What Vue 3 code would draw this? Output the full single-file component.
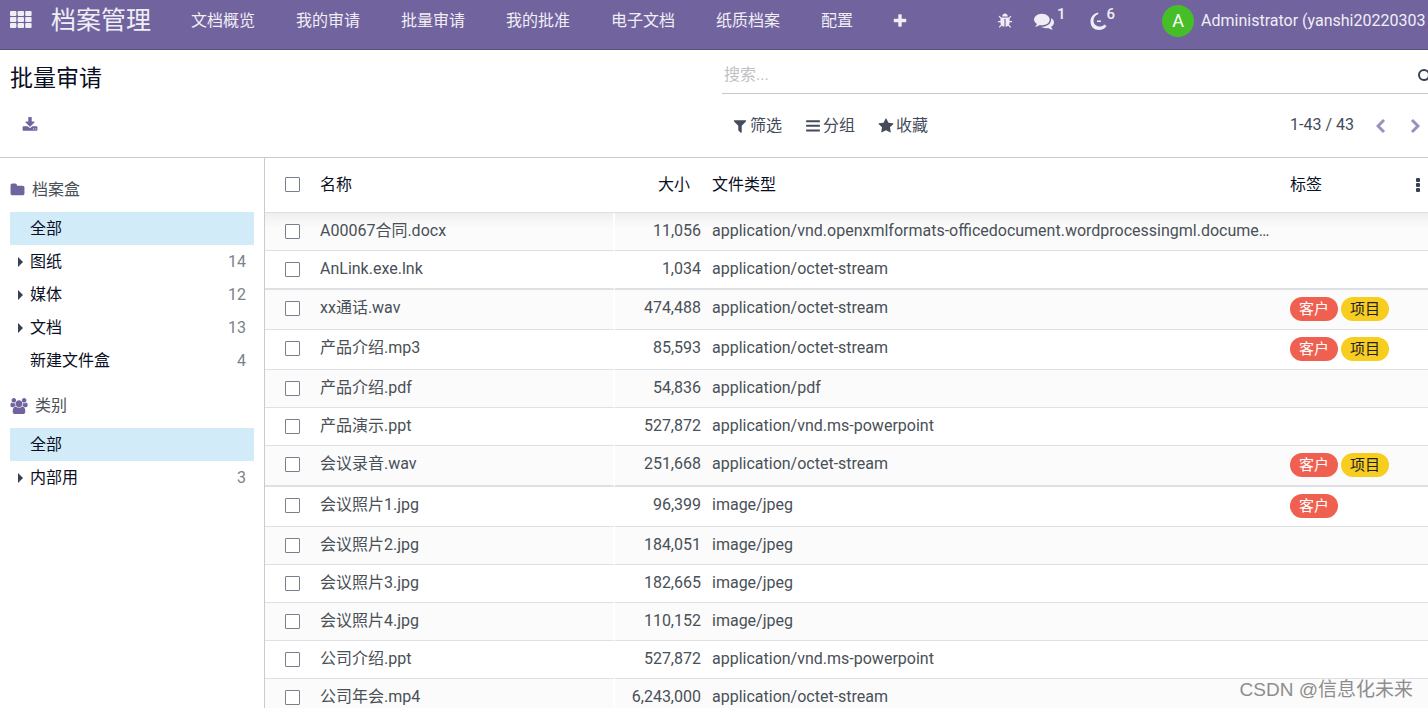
<script setup>
import { ref } from 'vue'

const paths = {
  plus: 'M1600 736v192q0 40-28 68t-68 28h-416v416q0 40-28 68t-68 28h-192q-40 0-68-28t-28-68v-416h-416q-40 0-68-28t-28-68v-192q0-40 28-68t68-28h416v-416q0-40 28-68t68-28h192q40 0 68 28t28 68v416h416q40 0 68 28t28 68z',
  bug: 'M1696 960q0 26-19 45t-45 19h-224q0 171-67 290l208 209q19 19 19 45t-19 45q-18 19-45 19t-45-19l-198-197q-5 5-15 13t-42 28.5-65 36.5-82 29-97 13v-896h-128v896q-51 0-101.5-13.5t-87-33-66-39-43.5-32.5l-15-14-183 207q-20 21-48 21-24 0-43-16-19-18-20.5-44.5t15.5-46.5l202-227q-58-114-58-274h-224q-26 0-45-19t-19-45 19-45 45-19h224v-294l-173-173q-19-19-19-45t19-45 45-19 45 19l173 173h844l173-173q19-19 45-19t45 19 19 45-19 45l-173 173v294h224q26 0 45 19t19 45zm-480-576h-640q0-133 93.5-226.5t226.5-93.5 226.5 93.5 93.5 226.5z',
  comments: 'M1408 768q0 139-94 257t-256.5 186.5-353.5 68.5q-86 0-176-16-124 88-278 128-36 9-86 16h-3q-11 0-20.5-8t-11.5-21q-1-3-1-6.5t.5-6.5 2-6l2.5-5 3.5-5.5 4-5 4.5-5 4-4.5q5-6 23-25t26-29.5 22.5-29 25-38.5 20.5-44q-124-72-195-177t-71-224q0-139 94-257t256.5-186.5 353.5-68.5 353.5 68.5 256.5 186.5 94 257zm384 256q0 120-71 224.5t-195 176.5q10 24 20.5 44t25 38.5 22.5 29 26 29.5 23 25q1 1 4 4.5t4.5 5 4 5 3.5 5.5l2.5 5 2 6 .5 6.5-1 6.5q-3 14-13 22t-22 7q-50-7-86-16-154-40-278-128-90 16-176 16-271 0-472-132 58 4 88 4 161 0 309-45t264-129q125-92 192-212t67-254q0-77-23-152 129 71 204 178t75 230z',
  filter: 'M1595 295q17 41-14 70l-493 493v742q0 42-39 59-13 5-25 5-27 0-45-19l-256-256q-19-19-19-45v-486l-493-493q-31-29-14-70 17-39 59-39h1280q42 0 59 39z',
  group: 'M128 256h1536v224h-1536zM128 768h1536v224h-1536zM128 1280h1536v224h-1536z',
  star: 'M1728 647q0 22-26 48l-363 354 86 500q1 7 1 20 0 21-10.5 35.5t-30.5 14.5q-19 0-40-12l-449-236-449 236q-22 12-40 12-21 0-31.5-14.5t-10.5-35.5q0-6 2-20l86-500-364-354q-25-27-25-48 0-37 56-46l502-73 225-455q19-41 49-41t49 41l225 455 502 73q56 9 56 46z',
  folder: 'M1728 608v704q0 92-66 158t-158 66h-1216q-92 0-158-66t-66-158v-960q0-92 66-158t158-66h320q92 0 158 66t66 158v32h672q92 0 158 66t66 158z',
  users: 'M593 896q-162 5-265 128h-134q-82 0-138-40.5t-56-118.5q0-353 124-353 6 0 43.5 21t97.5 42.5 119 21.5q67 0 133-23-5 37-5 66 0 159 93 256zm1071 637q0 120-73 189.5t-194 69.5h-874q-121 0-194-69.5t-73-189.5q0-53 3.5-103.5t14-109 26.5-108.5 43-97.5 62-81 85.5-53.5 111.5-20q10 0 43 21.5t73 48 107 48 135 21.5 135-21.5 107-48 73-48 43-21.5q61 0 111.5 20t85.5 53.5 62 81 43 97.5 26.5 108.5 14 109 3.5 103.5zm-1024-1277q0 106-75 181t-181 75-181-75-75-181 75-181 181-75 181 75 75 181zm704 384q0 159-112.5 271.5t-271.5 112.5-271.5-112.5-112.5-271.5 112.5-271.5 271.5-112.5 271.5 112.5 112.5 271.5zm576 225q0 78-56 118.5t-138 40.5h-134q-103-123-265-128 93-97 93-256 0-29-5-66 66 23 133 23 59 0 119-21.5t97.5-42.5 43.5-21q124 0 124 353zm-128-609q0 106-75 181t-181 75-181-75-75-181 75-181 181-75 181 75 75 181z',
  download: 'M1344 1344q0-26-19-45t-45-19-45 19-19 45 19 45 45 19 45-19 19-45zm256 0q0-26-19-45t-45-19-45 19-19 45 19 45 45 19 45-19 19-45zm128-224v320q0 40-28 68t-68 28h-1472q-40 0-68-28t-28-68v-320q0-40 28-68t68-28h465l135 136q58 56 136 56t136-56l136-136h464q40 0 68 28t28 68zm-325-569q17 41-14 70l-448 448q-18 19-45 19t-45-19l-448-448q-31-29-14-70 17-39 59-39h256v-448q0-26 19-45t45-19h256q26 0 45 19t19 45v448h256q42 0 59 39z',
}

const menus = ['文档概览', '我的审请', '批量审请', '我的批准', '电子文档', '纸质档案', '配置']

const filters = [
  { icon: 'filter', label: '筛选' },
  { icon: 'group', label: '分组' },
  { icon: 'star', label: '收藏' },
]

const sections = [
  {
    title: '档案盒',
    icon: 'folder',
    box: '0 0 1792 1792',
    items: [
      { label: '全部', active: true },
      { label: '图纸', count: 14, fold: true },
      { label: '媒体', count: 12, fold: true },
      { label: '文档', count: 13, fold: true },
      { label: '新建文件盒', count: 4 },
    ],
  },
  {
    title: '类别',
    icon: 'users',
    box: '0 0 1920 1792',
    items: [
      { label: '全部', active: true },
      { label: '内部用', count: 3, fold: true },
    ],
  },
]

const stream = 'application/octet-stream'
const ppt = 'application/vnd.ms-powerpoint'
const files = [
  { name: 'A00067合同.docx', size: '11,056', type: 'application/vnd.openxmlformats-officedocument.wordprocessingml.docume…', tags: [] },
  { name: 'AnLink.exe.lnk', size: '1,034', type: stream, tags: [], thick: true },
  { name: 'xx通话.wav', size: '474,488', type: stream, tags: ['客户', '项目'] },
  { name: '产品介绍.mp3', size: '85,593', type: stream, tags: ['客户', '项目'] },
  { name: '产品介绍.pdf', size: '54,836', type: 'application/pdf', tags: [] },
  { name: '产品演示.ppt', size: '527,872', type: ppt, tags: [] },
  { name: '会议录音.wav', size: '251,668', type: stream, tags: ['客户', '项目'], thick: true },
  { name: '会议照片1.jpg', size: '96,399', type: 'image/jpeg', tags: ['客户'] },
  { name: '会议照片2.jpg', size: '184,051', type: 'image/jpeg', tags: [] },
  { name: '会议照片3.jpg', size: '182,665', type: 'image/jpeg', tags: [] },
  { name: '会议照片4.jpg', size: '110,152', type: 'image/jpeg', tags: [] },
  { name: '公司介绍.ppt', size: '527,872', type: ppt, tags: [] },
  { name: '公司年会.mp4', size: '6,243,000', type: stream, tags: [] },
]

const query = ref('')
</script>

<template>
  <div class="app">
    <header class="navbar">
      <button class="apps" aria-label="应用">
        <svg viewBox="0 0 22 17">
          <template v-for="r in 3" :key="r">
            <rect v-for="c in 3" :key="c" :x="(c - 1) * 7.6" :y="(r - 1) * 6" width="6.4" height="5" rx="1" />
          </template>
        </svg>
      </button>
      <a class="brand" href="#">档案管理</a>
      <nav class="menus">
        <a v-for="m in menus" :key="m" href="#">{{ m }}</a>
        <button class="add" aria-label="新建"><svg class="ico" viewBox="0 0 1792 1792"><path :d="paths.plus" /></svg></button>
      </nav>
      <div class="systray">
        <button aria-label="调试"><svg class="ico" viewBox="0 0 1792 1792"><path :d="paths.bug" /></svg></button>
        <button class="chat" aria-label="消息">
          <svg class="ico large" viewBox="0 0 1792 1792"><path :d="paths.comments" /></svg><span class="badge">1</span>
        </button>
        <button class="activity" aria-label="活动">
          <svg class="ico moon" viewBox="0 0 18 18">
            <path d="M8 .5C3.500 1.500 .5 5 .5 9.500C.5 14.500 4 18 9 18C12 18 15 16.500 16.500 14L14.500 12.500C13 14 11.500 14.500 10 14.500C6 14.500 3.500 12 3.500 8.500C3.500 5.500 5.500 3 8.500 2z" />
            <rect x="7" y="8.500" width="4" height="1.500" />
          </svg><span class="badge">6</span>
        </button>
        <button class="user"><span class="avatar">A</span><span>Administrator (yanshi20220303</span></button>
      </div>
    </header>

    <section class="panel">
      <div class="panel-left">
        <h1>批量审请</h1>
        <button class="export" aria-label="导出"><svg class="ico" viewBox="0 0 1792 1792"><path :d="paths.download" /></svg></button>
      </div>
      <div class="panel-right">
        <div class="search">
          <input v-model="query" type="text" placeholder="搜索..." aria-label="搜索" />
          <button aria-label="查找">
            <svg class="ico" viewBox="0 0 16 16"><circle cx="7" cy="7" r="5" /><path d="M11 11l4 4" /></svg>
          </button>
        </div>
        <div class="tools">
          <div class="filters">
            <button v-for="f in filters" :key="f.label">
              <svg class="ico" viewBox="0 0 1792 1792"><path :d="paths[f.icon]" /></svg>{{ f.label }}
            </button>
          </div>
          <div class="pager">
            <span>1-43 / 43</span>
            <button aria-label="上一页"><svg viewBox="0 0 10 16"><path d="M8 2L2 8l6 6" /></svg></button>
            <button aria-label="下一页"><svg viewBox="0 0 10 16"><path d="M2 2l6 6-6 6" /></svg></button>
          </div>
        </div>
      </div>
    </section>

    <main class="content">
      <aside class="sidebar">
        <section v-for="s in sections" :key="s.title">
          <h2><svg class="ico" :class="s.icon" :viewBox="s.box"><path :d="paths[s.icon]" /></svg>{{ s.title }}</h2>
          <ul>
            <li v-for="i in s.items" :key="i.label">
              <button :class="{ active: i.active }">
                <span class="fold"><svg v-if="i.fold" viewBox="0 0 5 10"><path d="M0 0l5 5-5 5z" /></svg></span>
                <span class="label">{{ i.label }}</span>
                <span v-if="i.count" class="count">{{ i.count }}</span>
              </button>
            </li>
          </ul>
        </section>
      </aside>

      <div class="list">
        <table>
          <colgroup>
            <col class="c-check" /><col class="c-name" /><col class="c-size" /><col /><col class="c-tags" /><col class="c-more" />
          </colgroup>
          <thead>
            <tr>
              <th class="check"><input type="checkbox" aria-label="全选" /></th>
              <th>名称</th>
              <th class="num">大小</th>
              <th>文件类型</th>
              <th>标签</th>
              <th class="more">
                <button aria-label="可选字段"><svg viewBox="0 0 4 14"><rect width="4" height="4" rx="1" /><rect y="5" width="4" height="4" rx="1" /><rect y="10" width="4" height="4" rx="1" /></svg></button>
              </th>
            </tr>
          </thead>
          <tbody>
            <tr v-for="f in files" :key="f.name" :class="{ thick: f.thick }">
              <td class="check"><input type="checkbox" :aria-label="f.name" /></td>
              <td class="name">{{ f.name }}</td>
              <td class="num">{{ f.size }}</td>
              <td class="type">{{ f.type }}</td>
              <td class="tags" colspan="2">
                <div v-if="f.tags.length" class="tag-row">
                  <span v-for="t in f.tags" :key="t" class="tag" :class="{ yellow: t === '项目' }">{{ t }}</span>
                </div>
              </td>
            </tr>
          </tbody>
        </table>
      </div>
    </main>
    <div class="watermark">CSDN @信息化未来</div>
  </div>
</template>

<style>
body { margin: 0; overflow: hidden; }
</style>

<style scoped>
.app {
  position: relative;
  display: flex;
  flex-direction: column;
  height: 100vh;
  overflow: hidden;
  background: #fff;
  color: #495057;
  font: 16px/24px Roboto, "Noto Sans CJK SC", sans-serif;
}
.app * { box-sizing: border-box; }
button { padding: 0; border: 0; background: none; color: inherit; font: inherit; cursor: pointer; }
a { color: inherit; text-decoration: none; }
svg { display: block; fill: currentColor; }
.ico { width: 16px; height: 16px; flex: none; }
.large { width: 20px; height: 20px; }
.moon { width: 18px; height: 18px; }

.navbar {
  display: flex;
  flex: none;
  height: 50px;
  padding: 0 0 7px 10px;
  align-items: center;
  background: #71639e;
  border-bottom: 1px solid #5a4f7f;
  color: #f0eef5;
  white-space: nowrap;
}
.apps { padding-bottom: 3px; }
.apps svg { width: 22px; height: 17px; }
.brand { margin-left: 19px; font-size: 25px; line-height: 40px; }
.menus { display: flex; align-items: center; gap: 41px; margin-left: 40px; }
.add { margin-left: -2px; }
.systray { display: flex; align-items: center; flex: none; margin-left: auto; width: 431px; }
.systray button { flex: none; }
.chat, .activity { display: flex; align-items: center; }
.chat { margin-left: 21px; }
.activity { margin-left: 24px; }
.badge { margin: 0 0 14px 3px; font-size: 15px; line-height: 16px; font-weight: 500; }
.activity .badge { margin-left: -1px; }
.user { display: flex; align-items: center; gap: 7px; margin-left: 47px; }
.avatar { width: 32px; height: 32px; border-radius: 50%; background: #46be28; color: #fff; font-size: 18px; line-height: 32px; text-align: center; }

.panel { display: flex; flex: none; height: 108px; border-bottom: 1px solid #c9cbd2; }
.panel-left { flex: 1 1 0; padding: 13px 10px 0; }
.panel-right { flex: 1 1 0; padding: 8px 0 0 8px; margin-left: -12px; min-width: 0; }
h1 { margin: 0; font-size: 23px; line-height: 32px; font-weight: 400; color: #0a0f24; }
.export { display: block; margin: 22px 0 0 12px; color: #71639e; }
.search { display: flex; align-items: center; height: 36px; border-bottom: 1px solid #c6c8cc; overflow: hidden; }
.search input { flex: 1; min-width: 0; padding: 0 2px 2px; border: 0; outline: 0; background: none; color: inherit; font: inherit; }
.search input::placeholder { color: #bfc0c3; opacity: 1; }
.search button { flex: none; margin-right: -5px; }
.search svg { fill: none; stroke: #374151; stroke-width: 2; }
.tools { display: flex; justify-content: space-between; align-items: center; padding: 19px 8px 0 10px; }
.filters, .pager { display: flex; align-items: center; color: #444b5a; }
.filters { gap: 23px; }
.filters button { display: flex; align-items: center; gap: 2px; }
.pager span { margin: 0 22px 2px 0; }
.pager button { color: #9a90bb; }
.pager button + button { margin-left: 24px; }
.pager svg { width: 10px; height: 16px; fill: none; stroke: currentColor; stroke-width: 3; }

.content { display: flex; flex: 1; min-height: 0; }
.sidebar { flex: none; width: 265px; padding: 19px 10px 0; border-right: 1px solid #c9cbd2; }
h2 { display: flex; align-items: center; gap: 7px; margin: 0 0 9px; font-size: 16px; line-height: 26px; font-weight: 400; }
h2 .ico { margin-bottom: 1px; color: #71639e; }
h2 .folder { width: 15px; }
h2 .users { width: 18px; }
ul { margin: 0 0 16px; padding: 0; list-style: none; }
li button { display: flex; align-items: center; width: 100%; height: 33px; padding: 0 8px; text-align: left; color: #0a0f24; }
li .active { background: #d2ebf9; }
.fold { width: 12px; color: #374151; }
.fold svg { width: 5px; height: 10px; }
.label { flex: 1; }
.count { color: #7b828a; }

.list { flex: 1; min-width: 0; overflow: hidden; }
table { width: 100%; table-layout: fixed; border-collapse: separate; border-spacing: 0; }
.c-check { width: 45px; }
.c-name { width: 305px; }
.c-size { width: 91px; }
.c-tags { width: 120px; }
.c-more { width: 28px; }
th { height: 55px; padding: 0 10px 0; border-bottom: 1px solid #dfe0e4; text-align: left; font-weight: 400; color: #0a0f24; }
th:nth-child(3) { padding-right: 16px; }
th:nth-child(4), td.type { padding-left: 6px; }
th:nth-child(5), td.tags { padding-left: 10px; }
td { height: 38px; padding: 6px 10px 0; border-bottom: 1px solid #dfe0e4; vertical-align: top; white-space: nowrap; }
tbody tr:nth-child(odd) td { background: #fbfbfb; }
tbody tr:first-child td { background: linear-gradient(#efefef, #fbfbfb 14px); }
.thick td { height: 39px; border-bottom-width: 2px; }
td.name { border-right: 2px solid #fff; }
th.check { padding: 0 0 2px 20px; }
td.check { padding: 11px 0 0 20px; }
.check input { display: block; appearance: none; width: 15px; height: 15px; margin: 0; border: 1px solid #7a7f8c; border-radius: 1px; background: #fff; }
.num { text-align: right; }
td.num { padding-right: 5px; }
td.type { padding-right: 6px; overflow: hidden; text-overflow: ellipsis; }
td.tags { padding-top: 0; }
th.more { padding: 4px 0 0 16px; }
.more svg { width: 4px; height: 14px; color: #374151; }
.tag-row { display: flex; gap: 3px; padding: 7px 0 8px; }
.tag { padding: 0 9px; border-radius: 12px; background: #f06050; color: #fff; font-size: 15px; line-height: 24px; }
.tag.yellow { background: #f7cd1f; color: #1d1f2e; }

.watermark { position: absolute; right: 15px; bottom: 4px; color: #8d8d8d; font: 19px/28px "Liberation Sans", "Noto Sans CJK SC", sans-serif; }
</style>
